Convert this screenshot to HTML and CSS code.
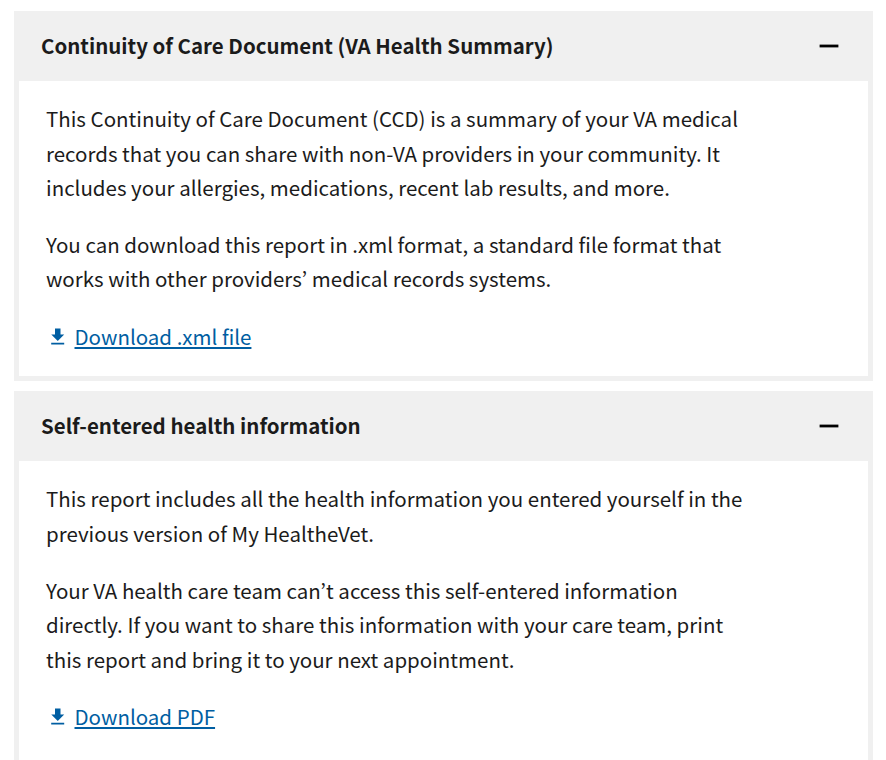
FILE: index.html
```html
<!DOCTYPE html>
<html lang="en">
<head>
<meta charset="utf-8">
<title>Download your medical records reports</title>
<link rel="stylesheet" href="styles.css">
</head>
<body>
<main class="accordion">
  <section class="item">
    <h2 class="item-header"><span class="title">Continuity of Care Document (VA Health Summary)</span>
      <svg class="minus" width="20" height="4" viewBox="0 0 20 4"><path fill="#000" d="M.6.6h18.8v2.8H.6z"/></svg>
    </h2>
    <div class="item-body">
      <p>This Continuity of Care Document (CCD) is a summary of your VA medical<br>records that you can share with non-VA providers in your community. It<br>includes your allergies, medications, recent lab results, and more.</p>
      <p>You can download this report in .xml format, a standard file format that<br>works with other providers’ medical records systems.</p>
      <p class="download"><svg class="icon" width="14" height="18" viewBox="0 0 14 18"><path fill="#005ea2" d="M13.2 6.4H9.5V.6H4V6.4H.3L6.75 12.9zM.2 14.8v1.8h13v-1.8z"/></svg><a href="#">Download .xml file</a></p>
    </div>
  </section>
  <section class="item item-last">
    <h2 class="item-header"><span class="title">Self-entered health information</span>
      <svg class="minus" width="20" height="4" viewBox="0 0 20 4"><path fill="#000" d="M.6.6h18.8v2.8H.6z"/></svg>
    </h2>
    <div class="item-body">
      <p>This report includes all the health information you entered yourself in the<br>previous version of My HealtheVet.</p>
      <p>Your VA health care team can’t access this self-entered information<br>directly. If you want to share this information with your care team, print<br>this report and bring it to your next appointment.</p>
      <p class="download"><svg class="icon" width="14" height="18" viewBox="0 0 14 18"><path fill="#005ea2" d="M13.2 6.4H9.5V.6H4V6.4H.3L6.75 12.9zM.2 14.8v1.8h13v-1.8z"/></svg><a href="#">Download PDF</a></p>
    </div>
  </section>
</main>
</body>
</html>
```
FILE: styles.css
```css
* { box-sizing: border-box; }
html { height: 100%; overflow: hidden; }
body {
  margin: 0;
  height: 100%;
  overflow: hidden;
  background: #fff;
  color: #1b1b1b;
  font-family: "Noto Sans CJK KR", "Source Sans Pro", sans-serif;
  font-size: 20.5px;
  line-height: 34.4px;
}
.accordion {
  display: flex;
  flex-direction: column;
  gap: 10px;
  padding: 11px 13px 0 14px;
}
.item-header {
  display: flex;
  align-items: center;
  justify-content: space-between;
  height: 70px;
  margin: 0;
  padding: 0 34px 0 27px;
  background: #f0f0f0;
  font-size: 20.48px;
  font-weight: 700;
}
.title { padding-bottom: 2px; }
.minus { display: block; }
.item-body {
  height: 300px;
  padding: 20.15px 27px 0;
  border: 5px solid #f0f0f0;
  border-top: 0;
}
.item-last .item-body { height: 320px; padding-top: 20.25px; }
p { margin: 0 0 22.7px; white-space: nowrap; }
.download { display: flex; align-items: center; }
.icon { margin: 2px 9.5px 0 5px; }
a {
  color: #005ea2;
  text-decoration: underline;
  text-decoration-thickness: 2px;
  text-underline-offset: 2px;
  text-decoration-skip-ink: none;
}
```
